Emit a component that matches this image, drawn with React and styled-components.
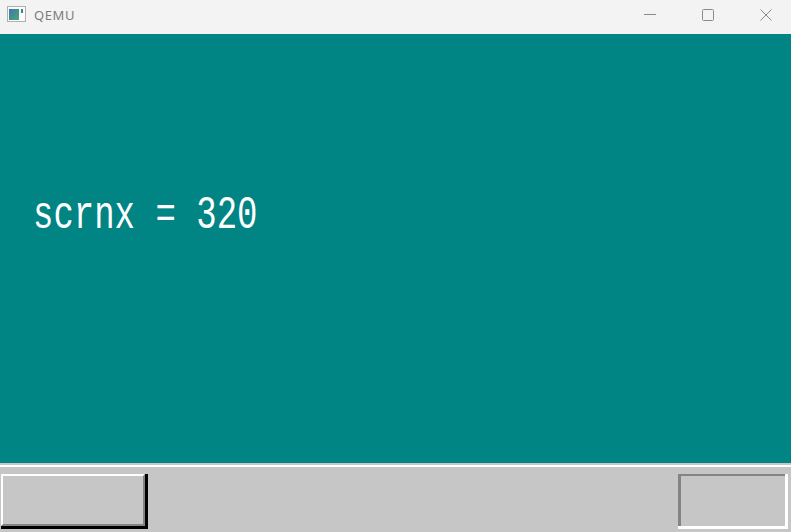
import styled, { createGlobalStyle } from 'styled-components';

const GlobalStyle = createGlobalStyle`
  html, body {
    margin: 0;
    padding: 0;
    height: 100%;
    overflow: hidden;
  }
  #root {
    height: 100%;
  }
`;

const Window = styled('div')`
  display: flex;
  flex-direction: column;
  width: 100%;
  height: 100vh;
  background-color: #c6c6c6;
`;

const TitleBar = styled('div')`
  display: flex;
  align-items: flex-start;
  height: 34px;
  flex-shrink: 0;
  background-color: #f3f3f3;
  font-family: "Noto Sans", "Open Sans", sans-serif;

  .icon {
    margin: 6px 0 0 7px;
    display: block;
  }

  .title {
    margin: 8px 0 0 8px;
    font-size: 13px;
    line-height: 14px;
    letter-spacing: 0.6px;
    color: #7b7b7b;
  }
`;

const Controls = styled('div')`
  display: flex;
  gap: 46px;
  margin-left: auto;
  padding: 9px 19px 0 0;

  svg {
    display: block;
  }
`;

const Screen = styled('div')`
  flex: 1;
  background-color: #008484;
  padding: 159px 0 0 33px;
  color: #ffffff;
  font-family: "Liberation Mono", "DejaVu Sans Mono", monospace;
`;

const Message = styled('p')`
  margin: 0;
  font-size: 34px;
  line-height: 34px;
  white-space: pre;
  transform: scaleY(1.34);
  transform-origin: top left;
`;

const Taskbar = styled('div')`
  display: flex;
  justify-content: space-between;
  align-items: flex-start;
  height: 69px;
  flex-shrink: 0;
  box-sizing: border-box;
  padding-top: 9px;
  border-top: 2px solid #c6c6c6;
  background-color: #c6c6c6;
  position: relative;

  &::before {
    content: '';
    position: absolute;
    left: 0;
    right: 0;
    top: 0;
    height: 2px;
    background-color: #ffffff;
  }
`;

const Button = styled('div')`
  box-sizing: border-box;
  width: ${(p) => p.$width}px;
  height: 55px;
  margin: ${(p) => p.$margin};
  border-style: solid;
  border-width: 0 3px 3px 0;
  border-color: ${(p) => (p.$sunken ? '#ffffff' : '#000000')};

  .inner {
    box-sizing: border-box;
    height: 100%;
    border-style: solid;
    border-width: ${(p) => (p.$sunken ? '2px 0 0 3px' : '2px 2px 2px 2px')};
    border-color: ${(p) =>
      p.$sunken ? '#848484' : '#ffffff #848484 #848484 #ffffff'};
  }
`;

const AppIcon = () => (
  <svg className="icon" width="19" height="16" viewBox="0 0 19 16">
    <defs>
      <linearGradient id="scr" x1="0" y1="0" x2="1" y2="1">
        <stop offset="0" stopColor="#3a78b8" />
        <stop offset="1" stopColor="#4aa86a" />
      </linearGradient>
    </defs>
    <rect x="0.5" y="0.5" width="18" height="15" fill="#fbfbfb" stroke="#b0b0b0" />
    <rect x="2" y="3" width="10" height="11" fill="url(#scr)" />
    <rect x="14" y="3" width="2" height="4" fill="#2b8c8a" />
  </svg>
);

export default function App() {
  return (
    <>
      <GlobalStyle />
      <Window>
        <TitleBar>
          <AppIcon />
          <span className="title">QEMU</span>
          <Controls>
            <svg width="12" height="12" viewBox="0 0 12 12">
              <path d="M0 5.5H12" stroke="#8a8a8a" strokeWidth="1" />
            </svg>
            <svg width="12" height="12" viewBox="0 0 12 12">
              <rect x="0.5" y="0.5" width="11" height="11" rx="1" fill="none" stroke="#8a8a8a" />
            </svg>
            <svg width="12" height="12" viewBox="0 0 12 12">
              <path d="M0.5 0.5L11.5 11.5M11.5 0.5L0.5 11.5" stroke="#8a8a8a" strokeWidth="1" />
            </svg>
          </Controls>
        </TitleBar>
        <Screen>
          <Message>scrnx = 320</Message>
        </Screen>
        <Taskbar>
          <Button $width={147} $margin="0 0 0 1px">
            <div className="inner" />
          </Button>
          <Button $width={110} $margin="0 3px 0 0" $sunken>
            <div className="inner" />
          </Button>
        </Taskbar>
      </Window>
    </>
  );
}
